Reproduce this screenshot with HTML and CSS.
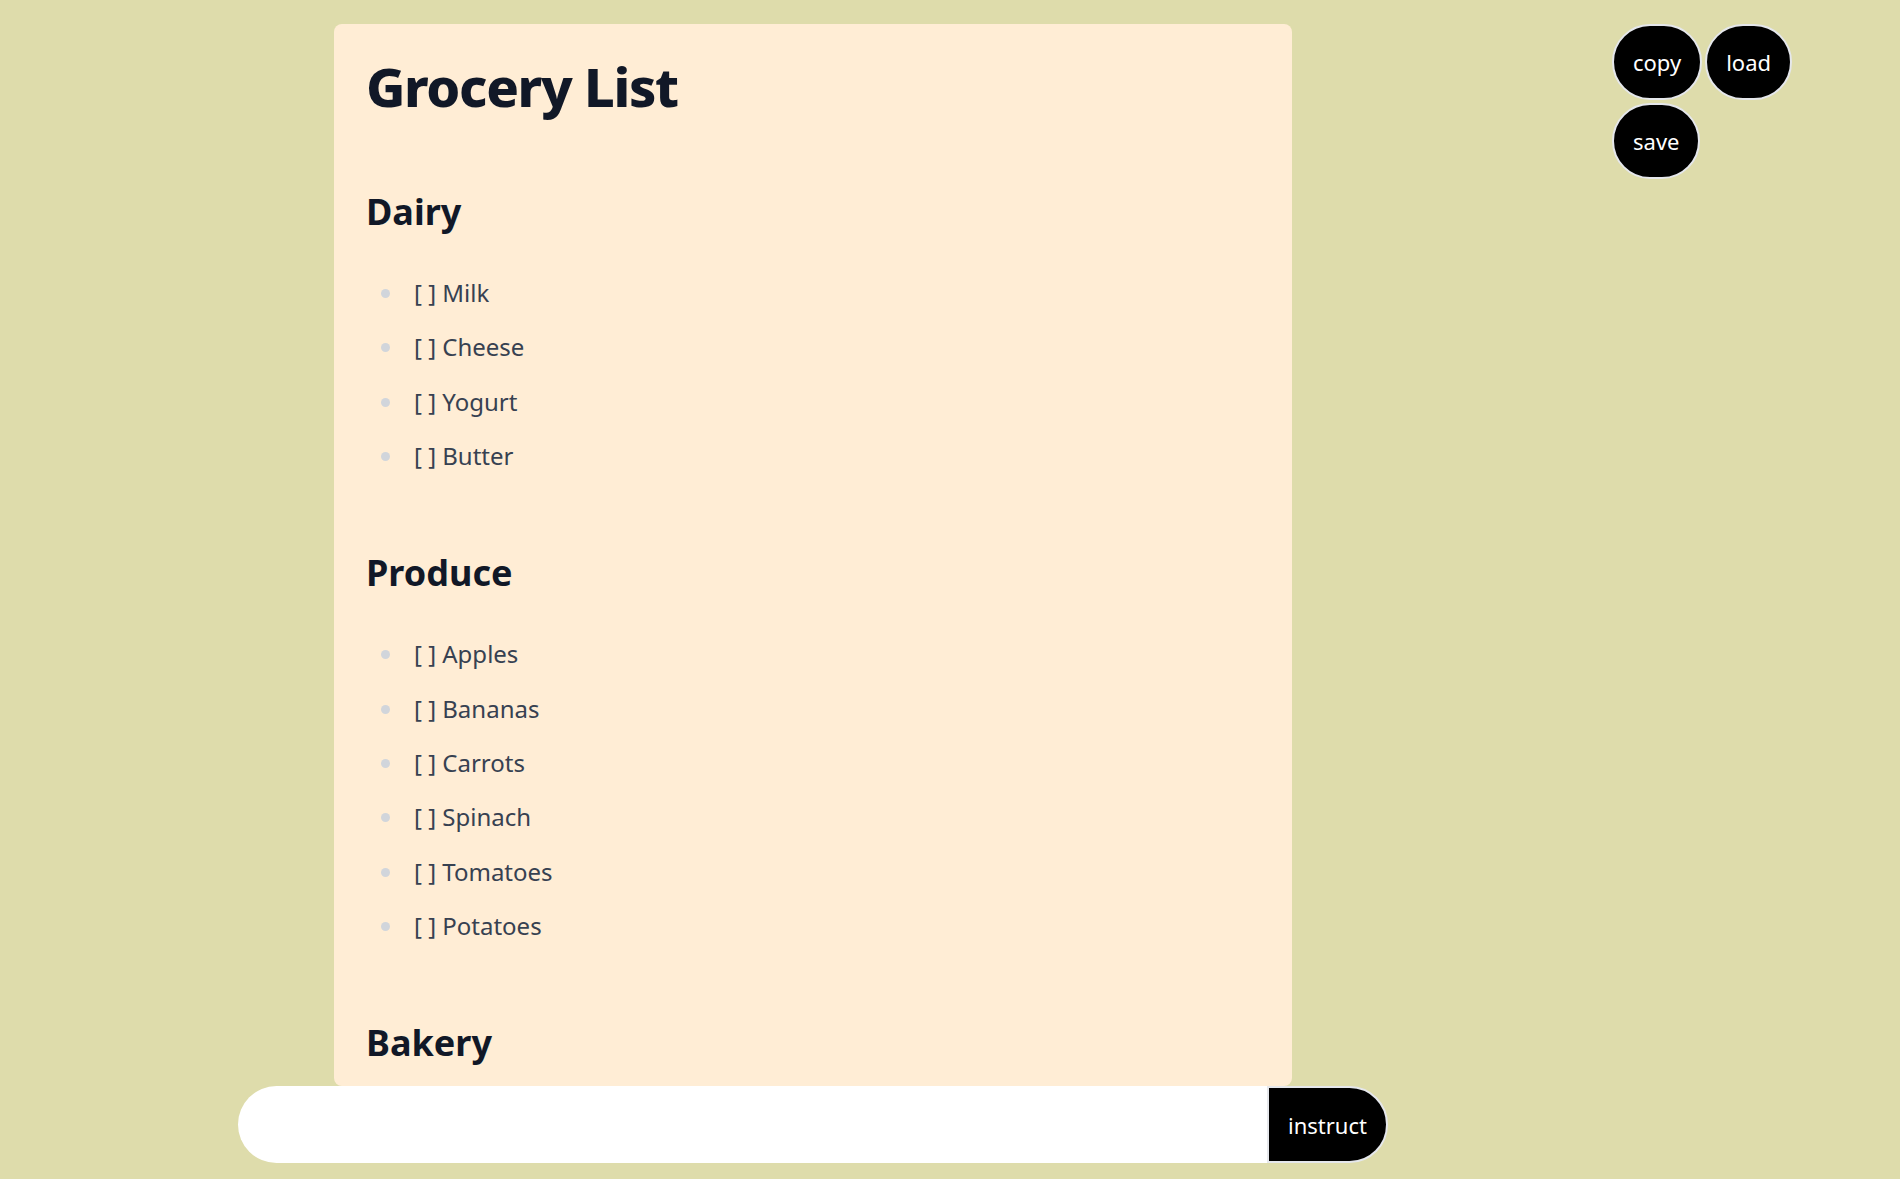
FILE: index.html
```html
<!DOCTYPE html>
<html lang="en">
<head>
  <meta charset="UTF-8">
  <meta name="viewport" content="width=device-width, initial-scale=1.0">
  <title>Grocery List</title>
  <link rel="stylesheet" href="styles.css">
</head>
<body>
  <div class="page">
    <!-- document -->
    <div class="doc">
      <h1>Grocery List</h1>

      <h2>Dairy</h2>
      <ul>
        <li>[ ] Milk</li>
        <li>[ ] Cheese</li>
        <li>[ ] Yogurt</li>
        <li>[ ] Butter</li>
      </ul>

      <h2>Produce</h2>
      <ul>
        <li>[ ] Apples</li>
        <li>[ ] Bananas</li>
        <li>[ ] Carrots</li>
        <li>[ ] Spinach</li>
        <li>[ ] Tomatoes</li>
        <li>[ ] Potatoes</li>
      </ul>

      <h2>Bakery</h2>
    </div>

    <!-- instruction bar -->
    <form class="instruct-bar" onsubmit="return false;">
      <input type="text" class="instruct-input">
      <button class="instruct-button">instruct</button>
    </form>
  </div>

  <!-- tools -->
  <div class="tools">
    <button class="tool-button">copy</button>
    <button class="tool-button">load</button>
    <button class="tool-button">save</button>
  </div>
</body>
</html>
```

FILE: styles.css
```css
body {
  margin: 0;
  padding: 0;
  background-color: #dedcab;
  font-family: "Noto Sans", "Open Sans", sans-serif;
}

.page {
  width: 1626px;
  height: 100vh;
  box-sizing: border-box;
  padding: 24px 0 16px;
  display: flex;
  flex-direction: column;
  align-items: center;
}

.doc {
  flex: 1;
  min-height: 0;
  width: 958px;
  box-sizing: border-box;
  padding: 32px 32px 0;
  overflow: hidden;
  background-color: #ffedd5;
  border-radius: 8px;
  font-size: 24px;
  line-height: 1.75;
  color: #374151;
}

.doc h1 {
  margin: 0 0 48px;
  font-size: 54px;
  font-weight: 800;
  line-height: 1.111;
  letter-spacing: -0.025em;
  color: #111827;
}

.doc h2 {
  margin: 72px 0 36px;
  font-size: 36px;
  font-weight: 700;
  line-height: 1.333;
  color: #111827;
}

.doc ul {
  margin: 30px 0;
  padding-left: 39px;
  list-style: disc;
}

.doc li {
  margin: 12.4px 0;
  padding-left: 9px;
}

.doc li::marker {
  color: #d1d5db;
}

.instruct-bar {
  display: flex;
  width: 1150px;
  height: 77px;
  margin: 0;
}

.instruct-input {
  flex: 1;
  border: none;
  outline: none;
  padding: 0 32px;
  background-color: #fff;
  border-radius: 9999px 0 0 9999px;
  font-family: inherit;
  font-size: 24px;
}

.instruct-button {
  width: 121px;
  padding: 0;
  background-color: #000;
  color: #fff;
  border: 2px solid #e5e7eb;
  border-radius: 0 9999px 9999px 0;
  font-family: inherit;
  font-size: 22px;
  cursor: pointer;
}

.tools {
  position: absolute;
  top: 24px;
  left: 1612px;
  width: 182px;
  display: flex;
  flex-wrap: wrap;
  gap: 3px 3px;
}

.tool-button {
  height: 76px;
  padding: 0 19px;
  background-color: #000;
  color: #fff;
  border: 2px solid #e5e7eb;
  border-radius: 9999px;
  font-family: inherit;
  font-size: 22px;
  cursor: pointer;
}
```
